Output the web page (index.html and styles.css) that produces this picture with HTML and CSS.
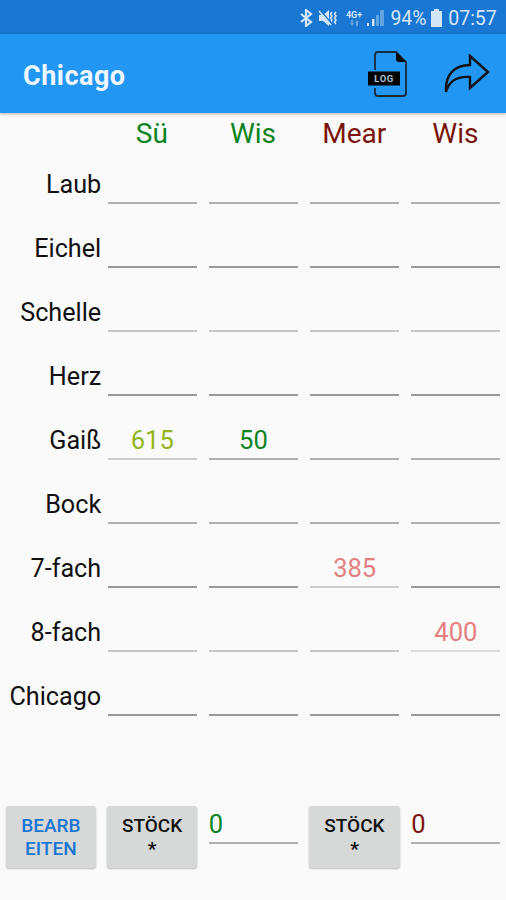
FILE: index.html
```html
<!DOCTYPE html>
<html lang="de">
<head>
    <meta charset="UTF-8">
    <meta name="viewport" content="width=device-width, initial-scale=1.0">
    <title>Chicago</title>
    <link rel="stylesheet" href="styles.css">
</head>
<body>

<div class="status-bar">
    <svg class="bluetooth" width="14" height="18" viewBox="0 0 14 18"><path d="M2 5l10 8-5 4V1l5 4-10 8"/></svg>
    <svg class="mute" width="20" height="18" viewBox="0 0 20 18"><path class="fill" d="M1 6h4l6-5v16l-6-5H1z"/><path d="M14 3l-1.500 2L14 7l-1.500 2L14 11l-1.500 2L14 15M18 3l-1.500 2L18 7l-1.500 2L18 11l-1.500 2L18 15"/><path class="slash" d="M2 1l13 15"/><path d="M1 2l12 14"/></svg>
    <div class="network">
        <span>4G+</span>
        <svg width="10" height="6" viewBox="0 0 10 6"><path d="M2 0h2v3h1L3 6 1 3h1zM7 6h2V3h1L8 0 6 3h1z"/></svg>
    </div>
    <svg class="signal" width="18" height="18" viewBox="0 0 18 18"><path d="M0 14h2v3H0zM5 10h2.500v7H5z"/><path class="weak" d="M9 6h3v11H9zM13 1h4v16h-4z"/></svg>
    <span class="percent">94%</span>
    <svg class="battery" width="11" height="18" viewBox="0 0 11 18"><path d="M3 0h5v2h3v16H0V2h3z"/></svg>
    <span class="clock">07:57</span>
</div>

<header class="toolbar">
    <h1>Chicago</h1>
    <svg class="log-icon" width="40" height="46" viewBox="0 0 40 46">
        <path class="outline" d="M7 19V4q0-3 3-3h18l10 10v31q0 3-3 3H10q-3 0-3-3v-5"/>
        <path d="M28 1v7q0 3 3 3h7z"/>
        <path d="M0 20.500h32v14H0z"/>
        <text x="16" y="31">LOG</text>
    </svg>
    <svg class="share-icon" width="46" height="40" viewBox="0 0 46 40"><path d="M26 2l18 16-18 16V23C13 22 5 27 2 38 1 21 10 11 26 11z"/></svg>
</header>

<main class="sheet">
    <div class="row names">
        <span></span>
        <span class="green">Sü</span>
        <span class="green">Wis</span>
        <span class="red">Mear</span>
        <span class="red">Wis</span>
    </div>
    <div class="row">
        <label>Laub</label>
        <div class="field"></div>
        <div class="field"></div>
        <div class="field"></div>
        <div class="field"></div>
    </div>
    <div class="row dark">
        <label>Eichel</label>
        <div class="field"></div>
        <div class="field"></div>
        <div class="field"></div>
        <div class="field"></div>
    </div>
    <div class="row light">
        <label>Schelle</label>
        <div class="field"></div>
        <div class="field"></div>
        <div class="field"></div>
        <div class="field"></div>
    </div>
    <div class="row dark">
        <label>Herz</label>
        <div class="field"></div>
        <div class="field"></div>
        <div class="field"></div>
        <div class="field"></div>
    </div>
    <div class="row">
        <label>Gaiß</label>
        <div class="field lime locked">615</div>
        <div class="field green">50</div>
        <div class="field"></div>
        <div class="field"></div>
    </div>
    <div class="row">
        <label>Bock</label>
        <div class="field"></div>
        <div class="field"></div>
        <div class="field"></div>
        <div class="field"></div>
    </div>
    <div class="row dark">
        <label>7-fach</label>
        <div class="field"></div>
        <div class="field"></div>
        <div class="field pink locked">385</div>
        <div class="field"></div>
    </div>
    <div class="row light">
        <label>8-fach</label>
        <div class="field"></div>
        <div class="field"></div>
        <div class="field"></div>
        <div class="field pink locked">400</div>
    </div>
    <div class="row dark">
        <label>Chicago</label>
        <div class="field"></div>
        <div class="field"></div>
        <div class="field"></div>
        <div class="field"></div>
    </div>
</main>

<footer class="row actions">
    <button class="edit">BEARB<br>EITEN</button>
    <button>STÖCK<br><b>*</b></button>
    <div class="field green">0</div>
    <button>STÖCK<br><b>*</b></button>
    <div class="field red">0</div>
</footer>

</body>
</html>
```

FILE: styles.css
```css
body {
    margin: 0;
    height: 900px;
    display: flex;
    flex-direction: column;
    overflow: hidden;
    background-color: #fafafa;
    font-family: Roboto, "Noto Sans", sans-serif;
    color: #111;
}
.status-bar {
    height: 34px;
    display: flex;
    align-items: center;
    justify-content: flex-end;
    box-sizing: border-box;
    padding: 2px 10px 0 0;
    background-color: #1976d2;
    color: #d3e6f8;
    font-size: 19.5px;
}
.status-bar svg {
    fill: #d3e6f8;
}
.status-bar .bluetooth {
    fill: none;
    stroke: #d3e6f8;
    stroke-width: 2.2;
    margin-right: 5px;
}
.status-bar .mute {
    stroke: #d3e6f8;
    stroke-width: 1.5;
    margin-right: 7px;
}
.mute path {
    fill: none;
}
.mute .fill {
    fill: #d3e6f8;
    stroke: none;
}
.mute .slash {
    stroke: #1976d2;
    stroke-width: 1.5;
}
.network {
    display: flex;
    flex-direction: column;
    align-items: center;
    width: 18px;
    margin-right: 4px;
    font-size: 9px;
    font-weight: bold;
    line-height: 9px;
}
.network svg {
    opacity: 0.4;
}
.signal {
    margin-right: 6px;
}
.signal .weak {
    opacity: 0.4;
}
.percent {
    width: 35px;
}
.battery {
    margin: 0 7px 0 5px;
}
.clock {
    width: 47px;
}
.percent,
.clock {
    display: flex;
    justify-content: center;
    white-space: nowrap;
}
.toolbar {
    height: 79px;
    display: flex;
    align-items: center;
    box-sizing: border-box;
    padding: 0 16px 0 23px;
    background-color: #2196f3;
    box-shadow: 0 1px 3px rgba(0, 0, 0, 0.3);
}
h1 {
    flex: 1;
    margin: 4px 0 0;
    font-size: 27px;
    font-weight: 700;
    letter-spacing: 0.5px;
    color: #eef7ff;
}
.log-icon {
    margin-right: 36px;
}
.log-icon .outline {
    fill: none;
    stroke: #1b2a38;
    stroke-width: 1.8;
}
.log-icon text {
    fill: #a9c4dc;
    font-size: 9.5px;
    font-weight: bold;
    text-anchor: middle;
    letter-spacing: 0.5px;
}
.share-icon {
    fill: none;
    stroke: #111;
    stroke-width: 2.4;
}
.row {
    display: grid;
    grid-template-columns: repeat(5, 1fr);
    height: 64px;
}
.names {
    height: 41px;
    line-height: 41px;
    font-size: 28px;
    text-align: center;
}
label {
    padding-top: 15px;
    font-size: 25.2px;
    line-height: 32px;
    text-align: right;
}
.field {
    height: 36px;
    margin: 12px 5.5px 0 6.4px;
    border-bottom: 2px solid #b0b0b0;
    font-size: 25.5px;
    line-height: 36px;
    text-align: center;
}
.dark .field {
    border-bottom-color: #999;
}
.light .field {
    border-bottom-color: #c6c6c6;
}
.row .locked {
    border-bottom-color: #cdcdcd;
}
.light .locked {
    border-bottom-color: #dadada;
}
.green {
    color: #0a8420;
}
.red {
    color: #7a1408;
}
.lime {
    color: #93b51c;
}
.pink {
    color: #e57f7f;
}
.actions {
    margin-top: 76px;
}
.actions .field {
    margin-top: 0;
    text-align: left;
}
button {
    height: 62px;
    margin: 0 5px 0 5.5px;
    padding: 0;
    border: none;
    border-radius: 3px;
    background-color: #d6d9d8;
    box-shadow: 0 1px 2px rgba(0, 0, 0, 0.25);
    font-family: inherit;
    font-size: 19px;
    font-weight: 500;
    line-height: 23px;
    color: #111;
}
.edit {
    color: #1976d2;
}
```
